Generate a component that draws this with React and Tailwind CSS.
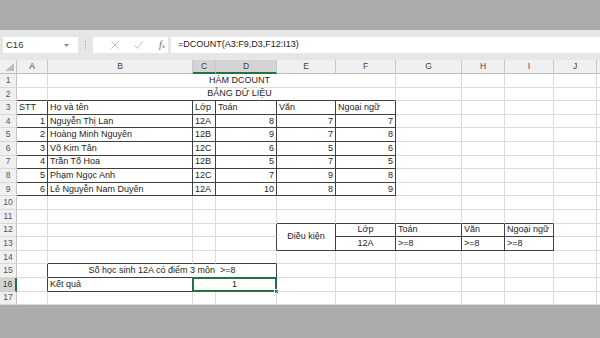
import React from "react";

const COLS = ["A", "B", "C", "D", "E", "F", "G", "H", "I", "J", ""];

const CELLS = {
  B1: { v: "HÀM DCOUNT", a: "title", span: 5 },
  B2: { v: "BẢNG DỮ LIỆU", a: "title", span: 5 },
  A3: { v: "STT" }, B3: { v: "Họ và tên" }, C3: { v: "Lớp" }, D3: { v: "Toán" }, E3: { v: "Văn" }, F3: { v: "Ngoại ngữ" },
  A4: { v: "1", a: "r" }, B4: { v: "Nguyễn Thị Lan" }, C4: { v: "12A" }, D4: { v: "8", a: "r" }, E4: { v: "7", a: "r" }, F4: { v: "7", a: "r" },
  A5: { v: "2", a: "r" }, B5: { v: "Hoàng Minh Nguyên" }, C5: { v: "12B" }, D5: { v: "9", a: "r" }, E5: { v: "7", a: "r" }, F5: { v: "8", a: "r" },
  A6: { v: "3", a: "r" }, B6: { v: "Võ Kim Tân" }, C6: { v: "12C" }, D6: { v: "6", a: "r" }, E6: { v: "5", a: "r" }, F6: { v: "6", a: "r" },
  A7: { v: "4", a: "r" }, B7: { v: "Trần Tố Hoa" }, C7: { v: "12B" }, D7: { v: "5", a: "r" }, E7: { v: "7", a: "r" }, F7: { v: "5", a: "r" },
  A8: { v: "5", a: "r" }, B8: { v: "Phạm Ngọc Anh" }, C8: { v: "12C" }, D8: { v: "7", a: "r" }, E8: { v: "9", a: "r" }, F8: { v: "8", a: "r" },
  A9: { v: "6", a: "r" }, B9: { v: "Lê Nguyễn Nam Duyên" }, C9: { v: "12A" }, D9: { v: "10", a: "r" }, E9: { v: "8", a: "r" }, F9: { v: "9", a: "r" },
  E12: { v: "Điều kiện", a: "c", rows: 2 },
  F12: { v: "Lớp", a: "c" }, G12: { v: "Toán" }, H12: { v: "Văn" }, I12: { v: "Ngoại ngữ" },
  F13: { v: "12A", a: "c" }, G13: { v: ">=8" }, H13: { v: ">=8" }, I13: { v: ">=8" },
  B15: { v: "Số học sinh 12A có điểm 3 môn  >=8", a: "c", span: 3 },
  B16: { v: "Kết quả" },
  C16: { v: "1", a: "c", span: 2, sel: true },
};

const SPAN = { 1: "", 2: "col-span-2", 3: "col-span-3", 5: "col-span-5" };

function inTable(r, c) {
  return (
    (r >= 3 && r <= 9 && c >= 0 && c <= 5) ||
    (r >= 12 && r <= 13 && c >= 4 && c <= 8) ||
    (r >= 15 && r <= 16 && c >= 1 && c <= 3)
  );
}

function buildCells() {
  const covered = new Set();
  const out = [];
  for (let r = 1; r <= 17; r++) {
    const sel = r === 16;
    out.push(
      <div
        key={"h" + r}
        className={
          sel
            ? "flex items-center justify-center bg-[#d4d4d4] border-r-2 border-r-[#217346] border-b border-b-[#cfcfcf] text-[8.5px] text-[#3c3c3c]"
            : "flex items-center justify-center bg-[#f0f0f0] border-r border-r-[#c4c4c4] border-b border-b-[#d8d8d8] text-[8.5px] text-[#555555]"
        }
      >
        {r}
      </div>
    );
    for (let c = 0; c < COLS.length; c++) {
      const key = COLS[c] + r;
      if (covered.has(r + "," + c)) continue;
      const cell = COLS[c] ? CELLS[key] : null;
      const span = cell && cell.span ? cell.span : 1;
      const rows = cell && cell.rows ? cell.rows : 1;
      const c1 = c + span - 1;
      const r1 = r + rows - 1;
      for (let rr = r; rr <= r1; rr++)
        for (let cc = c; cc <= c1; cc++) covered.add(rr + "," + cc);
      let darkR = false;
      for (let rr = r; rr <= r1; rr++)
        if (inTable(rr, c1) || inTable(rr, c1 + 1)) darkR = true;
      let darkB = false;
      for (let cc = c; cc <= c1; cc++)
        if (inTable(r1, cc) || inTable(r1 + 1, cc)) darkB = true;
      const last = c === COLS.length - 1;
      const a = cell ? cell.a : undefined;
      const just =
        a === "r" ? "justify-end pr-[2px]" : a === "c" ? "justify-center" : a === "title" ? "justify-center pl-[36px]" : "justify-start pl-[2px]";
      out.push(
        <div
          key={key + "_" + c}
          className={[
            "relative flex items-center overflow-visible whitespace-pre text-[9px] text-[#1e1e1e]",
            SPAN[span],
            rows === 2 ? "row-span-2" : "",
            last ? "" : darkR ? "border-r border-r-[#404040]" : "border-r border-r-[#dcdcdc]",
            darkB ? "border-b border-b-[#404040]" : "border-b border-b-[#dcdcdc]",
            just,
          ].join(" ")}
        >
          {cell ? <span className="leading-none">{cell.v}</span> : null}
          {cell && cell.sel ? (
            <div className="absolute -left-px -top-px right-[-1px] bottom-[-1px] border-2 border-[#217346]">
              <div className="absolute -right-[4px] -bottom-[4px] w-[5px] h-[5px] bg-[#217346] border border-white" />
            </div>
          ) : null}
        </div>
      );
    }
  }
  return out;
}

function FormulaBar() {
  return (
    <div className="h-[30px] bg-[#e6e6e6] flex items-start pt-[7px]">
      <div className="ml-[3px] w-[75px] h-[16px] bg-white flex items-center justify-between pl-[3px] pr-[9px]">
        <span className="text-[9.5px] text-[#333333]">C16</span>
        <svg width="5" height="3" viewBox="0 0 5 3">
          <path d="M0 0 L5 0 L2.5 3 Z" fill="#8a8a8a" />
        </svg>
      </div>
      <div className="w-[15px] h-[16px] flex flex-col items-center justify-center gap-[1.5px]">
        <div className="w-[1.5px] h-[1.5px] bg-[#b5b5b5]" />
        <div className="w-[1.5px] h-[1.5px] bg-[#b5b5b5]" />
        <div className="w-[1.5px] h-[1.5px] bg-[#b5b5b5]" />
      </div>
      <div className="w-[75px] h-[16px] bg-white flex items-center">
        <div className="w-[26px] flex justify-end">
          <svg width="8" height="8" viewBox="0 0 8 8">
            <path d="M0.5 0.5 L7.5 7.5 M7.5 0.5 L0.5 7.5" stroke="#b3b3b3" strokeWidth="0.9" />
          </svg>
        </div>
        <div className="w-[24px] flex justify-end">
          <svg width="9" height="8" viewBox="0 0 9 8">
            <path d="M0.5 4.5 L3.2 7.2 L8.5 0.5" stroke="#b3b3b3" strokeWidth="0.9" fill="none" />
          </svg>
        </div>
        <div className="w-[22px] flex justify-end">
          <span className="text-[10px] italic text-[#6a6a6a] leading-none" style={{ fontFamily: '"Liberation Serif", serif' }}>
            f<span className="text-[7px]">x</span>
          </span>
        </div>
      </div>
      <div className="ml-[3px] flex-1 h-[16px] bg-white flex items-center pl-[7px]">
        <span className="text-[9px] text-[#222222]">=DCOUNT(A3:F9,D3,F12:I13)</span>
      </div>
    </div>
  );
}

function ColumnHeaders() {
  return (
    <>
      <div className="relative bg-[#f0f0f0] border-r border-r-[#c4c4c4] border-b border-b-[#bfbfbf] flex items-end justify-end pr-[2px] pb-[2px]">
        <svg width="9" height="8" viewBox="0 0 9 8">
          <path d="M9 0 L9 8 L0 8 Z" fill="#bdbdbd" />
        </svg>
      </div>
      {COLS.map((l, i) => {
        const sel = l === "C" || l === "D";
        const last = i === COLS.length - 1;
        return (
          <div
            key={"c" + i}
            className={[
              "flex items-center justify-center text-[8.5px]",
              sel ? "bg-[#d4d4d4] border-b-2 border-b-[#217346] text-[#3c3c3c]" : "bg-[#f0f0f0] border-b border-b-[#bfbfbf] text-[#444444]",
              last ? "" : "border-r border-r-[#c9c9c9]",
            ].join(" ")}
          >
            {l}
          </div>
        );
      })}
    </>
  );
}

export default function App() {
  return (
    <div className="w-[600px] h-[338px] overflow-hidden bg-[#acacac] flex flex-col" style={{ fontFamily: '"Liberation Sans", Arial, sans-serif' }}>
      <div className="h-[30px] shrink-0 bg-[#acacac]" />
      <FormulaBar />
      <div className="bg-white grid grid-cols-[17px_31px_145px_23px_61px_59px_60px_66px_43px_49px_43px_1fr] grid-rows-[14px_repeat(17,13.6px)]">
        <ColumnHeaders />
        {buildCells()}
      </div>
      <div className="flex-1 bg-[#acacac]" />
    </div>
  );
}
